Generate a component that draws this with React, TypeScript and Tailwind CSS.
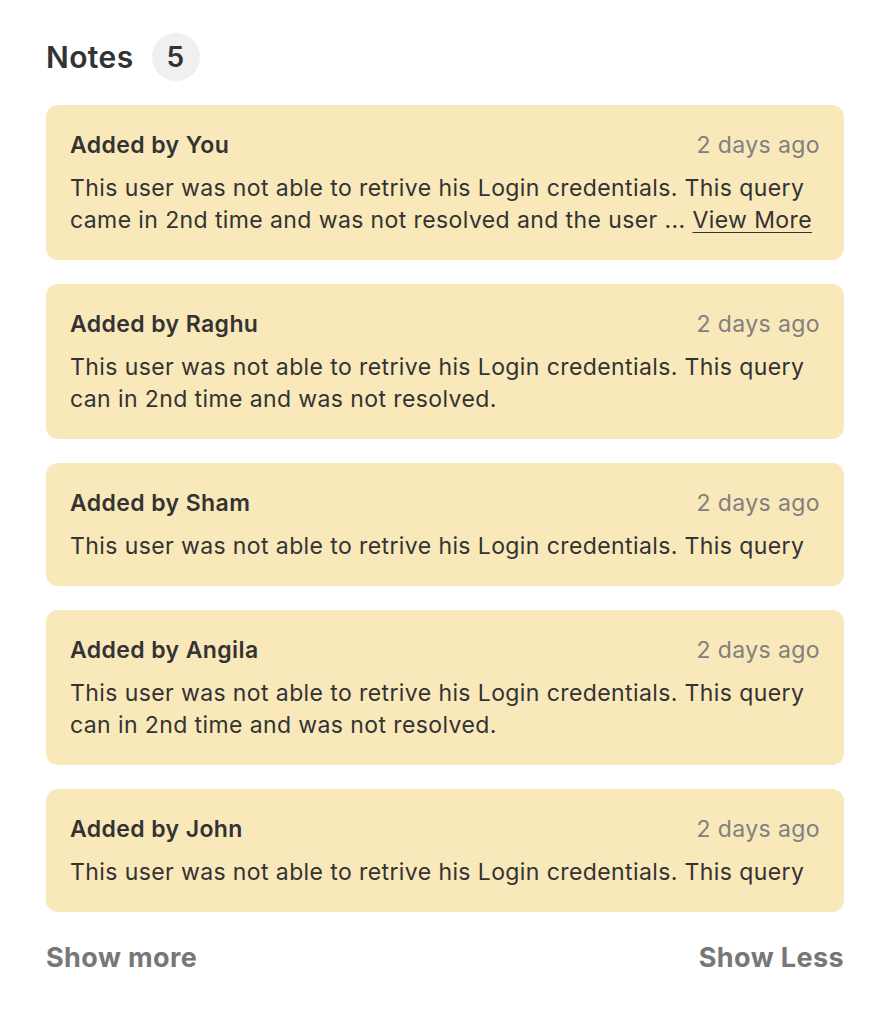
const notes = [
  {
    author: 'You',
    lines: [
      'This user was not able to retrive his Login credentials. This query',
      'came in 2nd time and was not resolved and the user ...',
    ],
    more: true,
  },
  {
    author: 'Raghu',
    lines: [
      'This user was not able to retrive his Login credentials. This query',
      'can in 2nd time and was not resolved.',
    ],
  },
  {
    author: 'Sham',
    lines: ['This user was not able to retrive his Login credentials. This query'],
  },
  {
    author: 'Angila',
    lines: [
      'This user was not able to retrive his Login credentials. This query',
      'can in 2nd time and was not resolved.',
    ],
  },
  {
    author: 'John',
    lines: ['This user was not able to retrive his Login credentials. This query'],
  },
];

function NoteCard({ note }: { note: (typeof notes)[number] }) {
  return (
    <div className="rounded-xl bg-[#f9e8b9] px-6 py-6">
      {/* header row */}
      <div className="flex items-center justify-between leading-8">
        <span className="text-[23px] font-semibold text-[#333]">Added by {note.author}</span>
        <span className="text-[23px] text-[#808080]">2 days ago</span>
      </div>
      {/* body */}
      <div className="mt-[11px] text-[23px] leading-8 text-[#333]">
        {note.lines.map((line, i) => (
          <p key={i} className="whitespace-nowrap">
            {line}
            {note.more && i === note.lines.length - 1 && (
              <>
                {' '}
                <a className="underline underline-offset-4 decoration-1">View More</a>
              </>
            )}
          </p>
        ))}
      </div>
    </div>
  );
}

export default function App() {
  return (
    <div className="min-h-screen bg-white font-['Inter',sans-serif] tracking-[0.4px]">
      <div className="px-[46px] pt-[33px] w-[890px]">
        {/* title */}
        <div className="flex items-center gap-[18px]">
          <h1 className="text-[30px] font-semibold text-[#333]">Notes</h1>
          <span className="flex h-12 w-12 items-center justify-center rounded-full bg-[#f0f0f0] text-[28px] font-semibold text-[#333]">
            5
          </span>
        </div>
        {/* notes */}
        <div className="mt-[24px] flex flex-col gap-6">
          {notes.map((n) => (
            <NoteCard key={n.author} note={n} />
          ))}
        </div>
        {/* footer */}
        <div className="mt-[26px] flex justify-between text-[27px] font-bold text-[#777]">
          <button>Show more</button>
          <button>Show Less</button>
        </div>
      </div>
    </div>
  );
}
